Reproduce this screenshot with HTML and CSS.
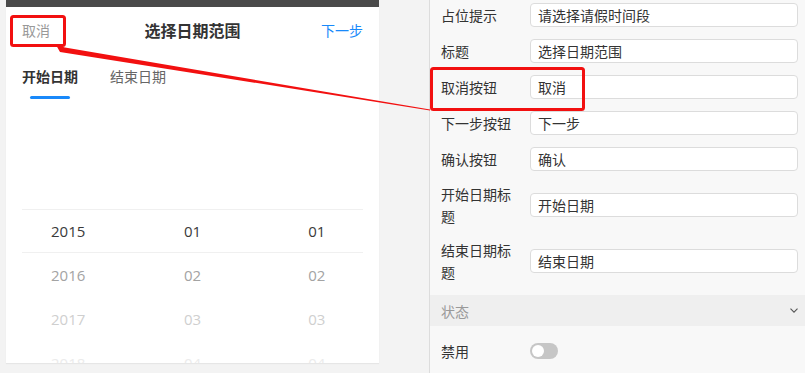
FILE: index.html
```html
<!DOCTYPE html>
<html lang="zh-CN">
<head>
<meta charset="utf-8">
<title>日期范围选择</title>
<link rel="stylesheet" href="styles.css">
</head>
<body>
<div class="page">
  <div class="stage">
    <div class="phone">
      <div class="topbar"></div>
      <div class="nav">
        <span class="nav-cancel">取消</span>
        <span class="nav-title">选择日期范围</span>
        <span class="nav-next">下一步</span>
      </div>
      <div class="tabs">
        <div class="tab active">开始日期</div>
        <div class="tab">结束日期</div>
      </div>
      <div class="picker">
        <div class="picker-col">
          <div class="item sel">2015</div>
          <div class="item f1">2016</div>
          <div class="item f2">2017</div>
          <div class="item f3">2018</div>
        </div>
        <div class="picker-col">
          <div class="item sel">01</div>
          <div class="item f1">02</div>
          <div class="item f2">03</div>
          <div class="item f3">04</div>
        </div>
        <div class="picker-col">
          <div class="item sel">01</div>
          <div class="item f1">02</div>
          <div class="item f2">03</div>
          <div class="item f3">04</div>
        </div>
        <div class="picker-frame"></div>
      </div>
    </div>
  </div>
  <div class="props">
    <div class="form">
      <div class="row"><div class="label">占位提示</div><div class="input">请选择请假时间段</div></div>
      <div class="row"><div class="label">标题</div><div class="input">选择日期范围</div></div>
      <div class="row"><div class="label">取消按钮</div><div class="input">取消</div></div>
      <div class="row"><div class="label">下一步按钮</div><div class="input">下一步</div></div>
      <div class="row"><div class="label">确认按钮</div><div class="input">确认</div></div>
      <div class="row"><div class="label">开始日期标题</div><div class="input">开始日期</div></div>
      <div class="row"><div class="label">结束日期标题</div><div class="input">结束日期</div></div>
    </div>
    <div class="section-head">
      <span>状态</span>
      <svg class="chev" width="8" height="5" viewBox="0 0 8 5"><polyline points="0.5,0.6 4,4.2 7.5,0.6" fill="none" stroke="#555" stroke-width="1.1"/></svg>
    </div>
    <div class="row state-row"><div class="label">禁用</div><span class="switch"><span class="knob"></span></span></div>
  </div>
  <svg class="annot" width="805" height="373" viewBox="0 0 805 373">
    <rect x="11.5" y="16.5" width="53" height="29" rx="2" fill="none" stroke="#f21010" stroke-width="3"/>
    <rect x="431.5" y="68.5" width="152" height="41" rx="2" fill="none" stroke="#f21010" stroke-width="3"/>
    <polygon points="56,45 65,47.5 430,109.6 430,110.4 60,52" fill="#f21010"/>
  </svg>
</div>
</body>
</html>
```
FILE: styles.css
```css
html, body {
  margin: 0;
  padding: 0;
}
body {
  background: #f3f3f3;
  font-family: "Noto Sans CJK SC", "Noto Sans", sans-serif;
  color: #333;
  overflow: hidden;
}
.page {
  position: relative;
  display: flex;
  width: 805px;
  height: 373px;
  overflow: hidden;
}
.stage {
  width: 429px;
  padding-left: 6px;
  box-sizing: border-box;
  background: #f3f3f3;
}
.phone {
  width: 373px;
  height: 363px;
  background: #fff;
  box-shadow: 0 1px 1px rgba(0,0,0,0.05);
  display: flex;
  flex-direction: column;
}
.topbar {
  height: 7px;
  background: #4a4a4a;
}
.nav {
  height: 46px;
  padding: 0 16px;
  display: grid;
  grid-template-columns: 1fr auto 1fr;
  align-items: center;
  font-size: 14px;
}
.nav-cancel { color: #999; justify-self: start; }
.nav-title { font-size: 16px; font-weight: 700; color: #333; }
.nav-next { color: #1989fa; justify-self: end; }
.tabs {
  height: 46px;
  display: flex;
}
.tab {
  position: relative;
  padding: 0 16px;
  line-height: 46px;
  font-size: 14px;
  color: #666;
}
.tab.active {
  color: #333;
  font-weight: 700;
}
.tab.active::after {
  content: "";
  position: absolute;
  left: 50%;
  bottom: 0;
  width: 40px;
  height: 3px;
  margin-left: -20px;
  border-radius: 2px;
  background: #1989fa;
}
.picker {
  position: relative;
  height: 264px;
  display: flex;
  overflow: hidden;
}
.picker-col {
  flex: 1;
  padding-top: 110px;
}
.item {
  height: 44px;
  line-height: 44px;
  text-align: center;
  font-family: "Open Sans", "Noto Sans", sans-serif;
  font-size: 15px;
  color: #3a3a3a;
}
.item.f1 { color: #a3a3a3; }
.item.f2 { color: #cfcfcf; }
.item.f3 { color: #ebebeb; }
.picker-frame {
  position: absolute;
  left: 16px;
  right: 16px;
  top: 110px;
  height: 44px;
  box-sizing: border-box;
  border-top: 1px solid #f0f0f0;
  border-bottom: 1px solid #f0f0f0;
  pointer-events: none;
}
.props {
  flex: 1;
  background: #f8f8f8;
  border-left: 1px solid #dcdcdc;
  padding-right: 7px;
  display: flex;
  flex-direction: column;
}
.form {
  margin-top: -3px;
  padding-bottom: 6px;
}
.row {
  display: flex;
  align-items: center;
  padding: 6px 0 6px 11px;
  font-size: 14px;
}
.label {
  width: 78px;
  margin-right: 11px;
  line-height: 22px;
  color: #333;
}
.input {
  flex: 1;
  height: 24px;
  box-sizing: border-box;
  border: 1px solid #dcdcdc;
  border-radius: 4px;
  background: #fff;
  padding-left: 7px;
  line-height: 22px;
  color: #333;
}
.section-head {
  height: 34px;
  margin-right: -7px;
  padding: 0 7px 0 11px;
  background: #efefef;
  display: flex;
  align-items: center;
  justify-content: space-between;
  font-size: 14px;
  color: #999;
}
.state-row {
  padding-top: 8px;
  height: 36px;
}
.switch {
  width: 28px;
  height: 16px;
  border-radius: 8px;
  background: #c6c6c6;
  display: flex;
  align-items: center;
  padding-left: 2px;
  box-sizing: border-box;
}
.knob {
  width: 12px;
  height: 12px;
  border-radius: 50%;
  background: #fff;
}
.annot {
  position: absolute;
  left: 0;
  top: 0;
  pointer-events: none;
}
```
